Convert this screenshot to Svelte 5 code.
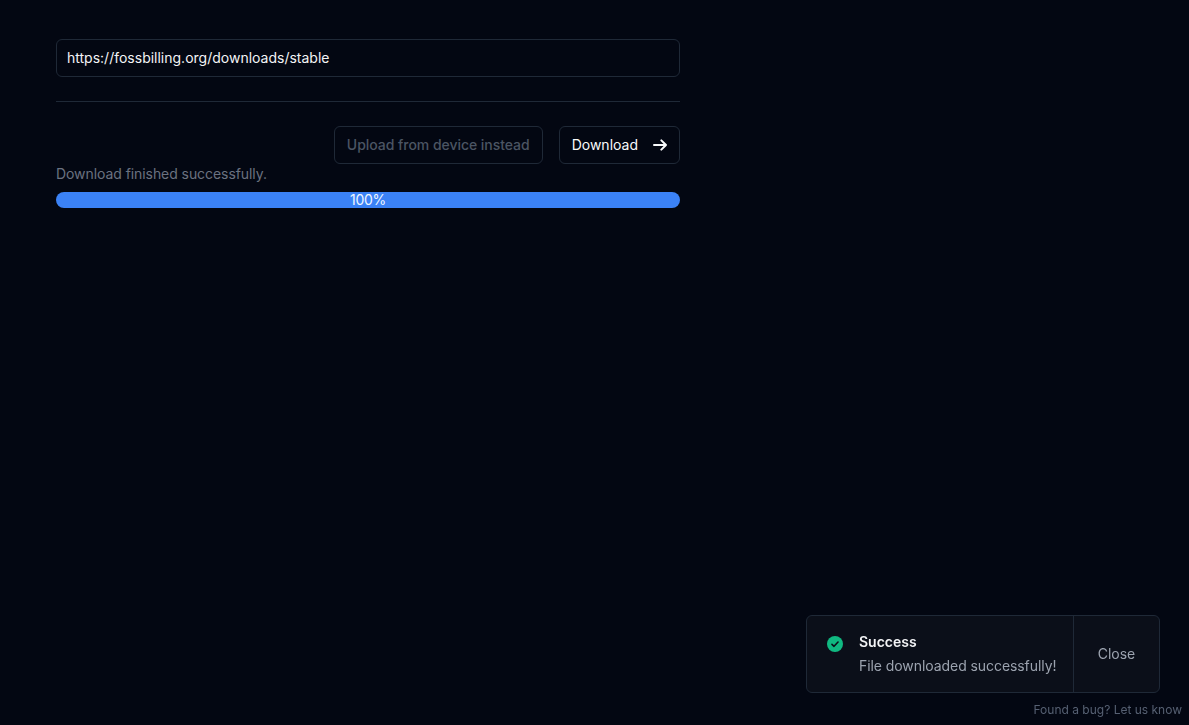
<script>
    let url = $state('https://fossbilling.org/downloads/stable');
    let progress = $state(100);
    let showToast = $state(true);
</script>

<main>
    <input class="url" bind:value={url} type="text" />
    <hr />
    <div class="actions">
        <button class="btn upload" disabled>Upload from device instead</button>
        <button class="btn primary">
            Download
            <svg width="16" height="16" viewBox="-1.5 0 24 24" fill="none" stroke="currentColor" stroke-width="3" stroke-linecap="round" stroke-linejoin="round" aria-hidden="true">
                <path d="M3 12h18M14 5l7 7-7 7" />
            </svg>
        </button>
    </div>
    <p class="status">Download finished successfully.</p>
    <div class="bar">
        <div class="fill" style="width: {progress}%">{progress}%</div>
    </div>
</main>

{#if showToast}
    <div class="toast">
        <div class="toast-body">
            <svg class="check" width="16" height="16" viewBox="0 0 20 20" aria-hidden="true">
                <circle cx="10" cy="10" r="10" fill="#10b981" />
                <path d="M6.2 10.4l2.6 2.5 5-5.4" fill="none" stroke="#0b0f19" stroke-width="2" stroke-linecap="round" stroke-linejoin="round" />
            </svg>
            <div>
                <div class="toast-title">Success</div>
                <div class="toast-text">File downloaded successfully!</div>
            </div>
        </div>
        <button class="toast-close" onclick={() => (showToast = false)}>Close</button>
    </div>
{/if}

<a class="bug" href="#bug">Found a bug? Let us know</a>

<style>
    :global(body) { margin: 0; background: #030712; font-family: Inter, sans-serif; }

    main { width: 624px; padding: 39px 0 0 56px; }

    .url {
        display: block;
        box-sizing: border-box;
        width: 100%;
        height: 38px;
        padding: 0 10px 2px;
        background: transparent;
        border: 1px solid #1f2937;
        border-radius: 6px;
        color: #f3f4f6;
        font: 14px/20px Inter, sans-serif;
        outline: none;
    }

    hr { border: 0; border-top: 1px solid #1f2937; margin: 24px 0; }

    .actions { display: flex; justify-content: flex-end; gap: 16px; }

    .btn {
        display: flex;
        align-items: center;
        gap: 13px;
        box-sizing: border-box;
        height: 38px;
        padding: 0 12px;
        background: transparent;
        border: 1px solid #1f2937;
        border-radius: 6px;
        color: #4b5563;
        font: 500 14px/20px Inter, sans-serif;
    }
    .upload { letter-spacing: -0.04px; }
    .primary { color: #f9fafb; cursor: pointer; font-weight: 400; }

    .status { margin: 0 0 8px; color: #6b7280; font-size: 14px; line-height: 20px; letter-spacing: -0.005em; }

    .bar { height: 16px; background: #1f2937; border-radius: 8px; overflow: hidden; }
    .fill { height: 100%; background: #3b82f6; color: #eff6ff; font-size: 14px; line-height: 16px; text-align: center; letter-spacing: -0.02em; }

    .toast {
        position: fixed;
        right: 29px;
        bottom: 32px;
        display: flex;
        box-sizing: border-box;
        width: 354px;
        height: 78px;
        background: #0b0f19;
        border: 1px solid #1f2937;
        border-radius: 6px;
    }
    .toast-body { flex: 1; display: flex; align-items: flex-start; gap: 16px; padding: 16px 16px 0 20px; }
    .check { margin-top: 4px; flex: none; }
    .toast-title { color: #f3f4f6; font-size: 14px; font-weight: 600; line-height: 20px; }
    .toast-text { margin-top: 4px; color: #9ca3af; font-size: 14px; line-height: 20px; white-space: nowrap; letter-spacing: -0.005em; }
    .toast-close {
        width: 86px;
        background: transparent;
        border: 0;
        border-left: 1px solid #1f2937;
        color: #9ca3af;
        font: 14px/20px Inter, sans-serif;
        cursor: pointer;
    }

    .bug {
        position: fixed;
        right: 7px;
        bottom: 7px;
        color: #566072;
        font-size: 12px;
        line-height: 16px;
        text-decoration: none;
    }
</style>
